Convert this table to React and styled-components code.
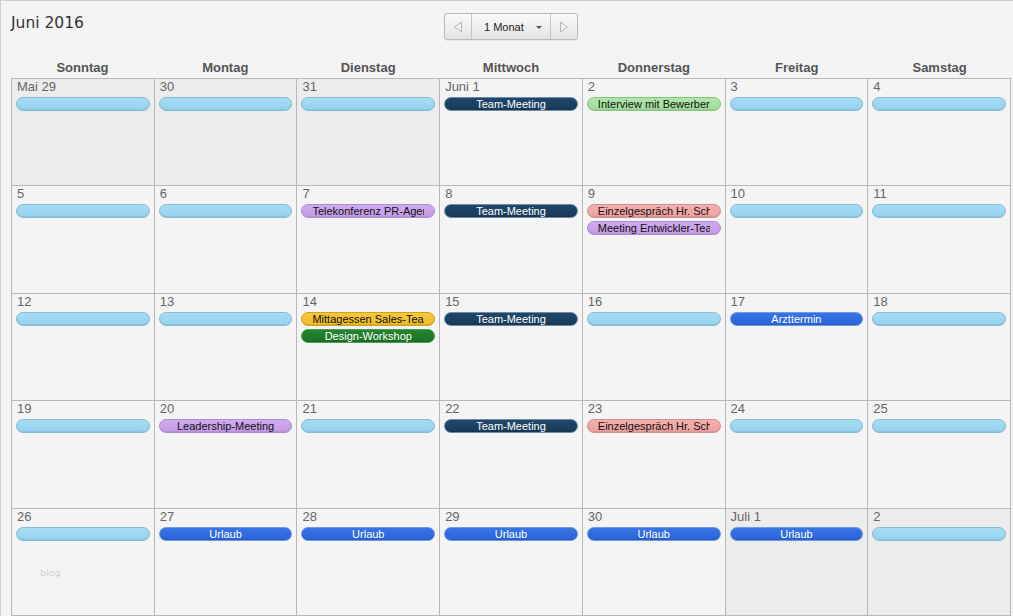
import React from 'react';
import styled, { createGlobalStyle } from 'styled-components';

const GlobalStyle = createGlobalStyle`
  html, body {
    margin: 0;
    padding: 0;
    background: #f4f4f4;
  }
  * {
    box-sizing: border-box;
  }
`;

const TONES = {
  empty: { bg: 'linear-gradient(to bottom, #a6dcf4, #96d2ee)', border: '#86bcd6', color: '#111' },
  navy: { bg: 'linear-gradient(to bottom, #20486a, #183a58)', border: '#6f8ba6', color: '#fff' },
  mint: { bg: 'linear-gradient(to bottom, #b0e6aa, #a0dc98)', border: '#88c282', color: '#111' },
  rose: { bg: 'linear-gradient(to bottom, #f4b0ae, #eca2a0)', border: '#d0908e', color: '#111' },
  lilac: { bg: 'linear-gradient(to bottom, #d0aaee, #c49ce6)', border: '#ad8cd0', color: '#111' },
  amber: { bg: 'linear-gradient(to bottom, #f5c83a, #edbb2a)', border: '#cfa21c', color: '#111' },
  forest: { bg: 'linear-gradient(to bottom, #238630, #1b7226)', border: '#4f9a55', color: '#fff' },
  royal: { bg: 'linear-gradient(to bottom, #3874e6, #2a63d8)', border: '#7099e0', color: '#fff' },
};

const E = (tone, title = '') => ({ tone, title });
const empty = [E('empty')];
const team = [E('navy', 'Team-Meeting')];
const urlaub = [E('royal', 'Urlaub')];

const weeks = [
  [
    { label: 'Mai 29', other: true, events: empty },
    { label: '30', other: true, events: empty },
    { label: '31', other: true, events: empty },
    { label: 'Juni 1', events: team },
    { label: '2', events: [E('mint', 'Interview mit Bewerber')] },
    { label: '3', events: empty },
    { label: '4', events: empty },
  ],
  [
    { label: '5', events: empty },
    { label: '6', events: empty },
    { label: '7', events: [E('lilac', 'Telekonferenz PR-Agentur')] },
    { label: '8', events: team },
    { label: '9', events: [E('rose', 'Einzelgespräch Hr. Schmidt'), E('lilac', 'Meeting Entwickler-Team')] },
    { label: '10', events: empty },
    { label: '11', events: empty },
  ],
  [
    { label: '12', events: empty },
    { label: '13', events: empty },
    { label: '14', events: [E('amber', 'Mittagessen Sales-Team'), E('forest', 'Design-Workshop')] },
    { label: '15', events: team },
    { label: '16', events: empty },
    { label: '17', events: [E('royal', 'Arzttermin')] },
    { label: '18', events: empty },
  ],
  [
    { label: '19', events: empty },
    { label: '20', events: [E('lilac', 'Leadership-Meeting')] },
    { label: '21', events: empty },
    { label: '22', events: team },
    { label: '23', events: [E('rose', 'Einzelgespräch Hr. Schmidt')] },
    { label: '24', events: empty },
    { label: '25', events: empty },
  ],
  [
    { label: '26', events: empty, watermark: true },
    { label: '27', events: urlaub },
    { label: '28', events: urlaub },
    { label: '29', events: urlaub },
    { label: '30', events: urlaub },
    { label: 'Juli 1', other: true, events: urlaub },
    { label: '2', other: true, events: empty },
  ],
];

const dayNames = ['Sonntag', 'Montag', 'Dienstag', 'Mittwoch', 'Donnerstag', 'Freitag', 'Samstag'];

const ArrowLeft = () => (
  <svg width="10" height="12" viewBox="0 0 10 12">
    <path d="M8.5 1 L1.5 6 L8.5 11 Z" fill="#f2f2f2" stroke="#b4b4b4" strokeWidth="1" strokeLinejoin="round" />
  </svg>
);

const ArrowRight = () => (
  <svg width="10" height="12" viewBox="0 0 10 12">
    <path d="M1.5 1 L8.5 6 L1.5 11 Z" fill="#f2f2f2" stroke="#b4b4b4" strokeWidth="1" strokeLinejoin="round" />
  </svg>
);

const App = () => {
  return (
    <>
      <GlobalStyle />
      <Page>
        <Header>
          <Title>Juni 2016</Title>
          <Toolbar>
            <NavSegment>
              <ArrowLeft />
            </NavSegment>
            <ViewSegment>
              <span>1 Monat</span>
              <Caret />
            </ViewSegment>
            <NavSegment>
              <ArrowRight />
            </NavSegment>
          </Toolbar>
          <div />
        </Header>

        <DayNames>
          {dayNames.map((name) => (
            <DayName key={name}>{name}</DayName>
          ))}
        </DayNames>

        <MonthGrid>
          {weeks.flat().map((day, i) => (
            <Cell key={i} $other={day.other}>
              <DateLabel>{day.label}</DateLabel>
              {day.events.map((ev, j) => (
                <Pill key={j} $tone={ev.tone}>
                  <PillText>{ev.title}</PillText>
                </Pill>
              ))}
              {day.watermark && <Watermark>blog</Watermark>}
            </Cell>
          ))}
        </MonthGrid>
      </Page>
    </>
  );
};

export default App;

const Page = styled.div`
  display: flex;
  flex-direction: column;
  width: 1013px;
  height: 616px;
  padding: 0 2px 0 10px;
  border-top: 1px solid #cfcfcf;
  border-left: 1px solid #cfcfcf;
  background: #f4f4f4;
`;

const Header = styled.div`
  display: grid;
  grid-template-columns: 1fr auto 1fr;
  align-items: start;
  height: 56px;
`;

const Title = styled.div`
  margin-top: 12px;
  font-family: 'DejaVu Sans', 'Noto Sans', sans-serif;
  font-size: 15.5px;
  line-height: 20px;
  color: #333;
`;

const Toolbar = styled.div`
  display: flex;
  margin-top: 12px;
  height: 27px;
  border: 1px solid #b9b9b9;
  border-radius: 3px;
  background: linear-gradient(to bottom, #fafafa, #e4e4e4);
  box-shadow: 0 1px 1px rgba(0, 0, 0, 0.06);
  overflow: hidden;
`;

const NavSegment = styled.div`
  display: flex;
  align-items: center;
  justify-content: center;
  width: 26px;
`;

const ViewSegment = styled.div`
  display: flex;
  align-items: center;
  gap: 12px;
  width: 80px;
  padding-left: 12px;
  border-left: 1px solid #c4c4c4;
  border-right: 1px solid #c4c4c4;
  font-family: 'Liberation Sans', Arial, sans-serif;
  font-size: 11px;
  color: #222;
`;

const Caret = styled.span`
  width: 0;
  height: 0;
  margin-top: 1px;
  border-left: 3px solid transparent;
  border-right: 3px solid transparent;
  border-top: 3px solid #555;
`;

const DayNames = styled.div`
  display: grid;
  grid-template-columns: repeat(7, 1fr);
  height: 21px;
`;

const DayName = styled.div`
  text-align: center;
  font-family: 'Liberation Sans', Arial, sans-serif;
  font-weight: bold;
  font-size: 13px;
  line-height: 21px;
  color: #555;
`;

const MonthGrid = styled.div`
  flex: 1;
  display: grid;
  grid-template-columns: repeat(7, 1fr);
  grid-template-rows: repeat(5, 1fr);
  border-top: 1px solid #b8b8b8;
  border-left: 1px solid #b8b8b8;
`;

const Cell = styled.div`
  position: relative;
  display: flex;
  flex-direction: column;
  gap: 3px;
  padding: 0 4px 0 4px;
  border-right: 1px solid #b8b8b8;
  border-bottom: 1px solid #b8b8b8;
  background: ${({ $other }) => ($other ? '#ececec' : '#f4f4f4')};
  min-width: 0;
`;

const DateLabel = styled.div`
  padding-left: 1px;
  font-family: 'Liberation Sans', Arial, sans-serif;
  font-size: 13px;
  line-height: 15px;
  color: #666;
`;

const Pill = styled.div`
  height: 14px;
  padding: 0 10px;
  border: 1px solid ${({ $tone }) => TONES[$tone].border};
  border-radius: 7px;
  background: ${({ $tone }) => TONES[$tone].bg};
  color: ${({ $tone }) => TONES[$tone].color};
  box-shadow: inset 0 -1px 1px rgba(0, 0, 0, 0.08);
`;

const PillText = styled.div`
  overflow: hidden;
  white-space: nowrap;
  text-align: center;
  font-family: 'Liberation Sans', Arial, sans-serif;
  font-size: 11px;
  line-height: 12px;
`;

const Watermark = styled.span`
  position: absolute;
  left: 28px;
  top: 58px;
  font-family: 'DejaVu Sans', sans-serif;
  font-size: 9.5px;
  color: #d2d2d2;
`;
